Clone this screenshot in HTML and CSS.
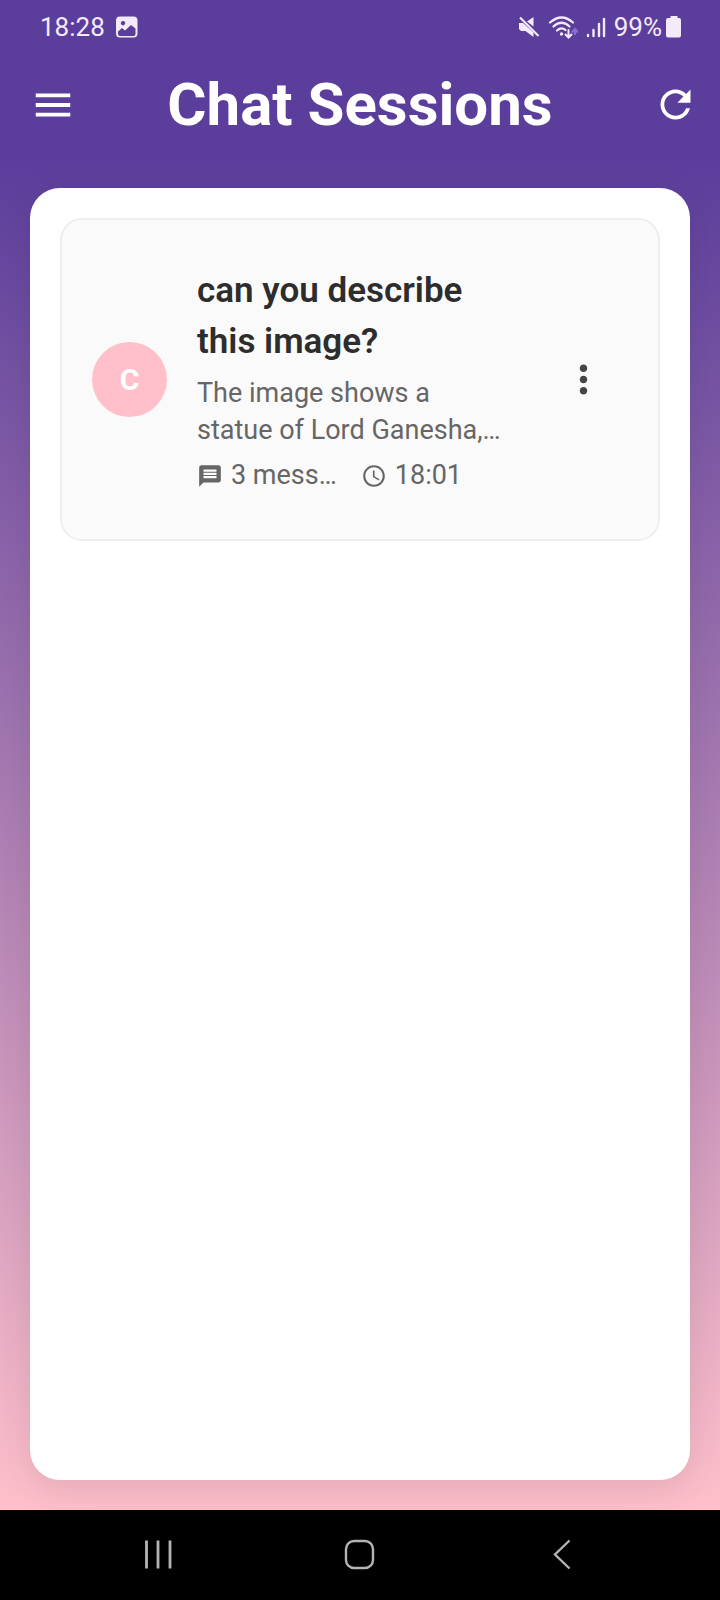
FILE: index.html
```html
<!DOCTYPE html>
<html lang="en">
<head>
<meta charset="utf-8">
<meta name="viewport" content="width=device-width, initial-scale=1">
<title>Chat Sessions</title>
<link rel="stylesheet" href="styles.css">
</head>
<body>
<div class="screen">
  <div class="status">
    <div class="status-group">
      <span>18:28</span>
      <svg width="22" height="22" viewBox="0 0 22 22" aria-hidden="true">
        <path fill="currentColor" fill-rule="evenodd" d="M4 .5h13.500a4 4 0 0 1 4 4v13a4 4 0 0 1-4 4H4a4 4 0 0 1-4-4v-13a4 4 0 0 1 4-4zM2 15.500v2.500a2 2 0 0 0 2 2h13.500a2 2 0 0 0 2-2v-5.500l-4.500-3.500-6 5.500-3-2.500zM7 5a2.200 2.200 0 1 0 .01 0z"/>
      </svg>
    </div>
    <div class="status-group status-right">
      <svg width="22" height="22" viewBox="0 0 22 22" aria-hidden="true">
        <path fill="currentColor" d="M15.500 1v9.500L9 5.500zM1 7h4l10.500 9.500V21L7.500 15H3L1 13z"/>
        <path stroke="currentColor" stroke-width="2.200" d="M2 1.500 20.500 20"/>
      </svg>
      <svg width="30" height="24" viewBox="0 0 30 24" aria-hidden="true">
        <g fill="none" stroke="currentColor" stroke-width="2.200" stroke-linecap="round">
          <path d="M2 7.500Q13.500-2.500 25 7.500M5.500 11.500Q13.500 4 21.500 11.500M9 15.500Q13.500 11.500 17.500 15"/>
          <path stroke-width="2" d="M20.500 15v7M17.500 19.500l3 3 3-3"/>
        </g>
        <circle cx="13.500" cy="19" r="1.700" fill="currentColor"/>
        <path fill="none" stroke="#8a6cd0" stroke-width="2.200" d="M27 20v-6M24 17.500l3-3.500 3 3.500"/>
      </svg>
      <svg width="20" height="22" viewBox="0 0 20 22" aria-hidden="true">
        <path fill="none" stroke="currentColor" stroke-width="2.400" stroke-linecap="round" d="M2 19v1M7.500 14v6M13 8v12M18 3v17"/>
      </svg>
      <span class="battery">99%
        <svg width="16" height="22" viewBox="0 0 16 22" aria-hidden="true">
          <path fill="currentColor" d="M4.500 0h7v2h1.500a2 2 0 0 1 2 2v15.500a2 2 0 0 1-2 2h-11a2 2 0 0 1-2-2V4a2 2 0 0 1 2-2h2.500z"/>
        </svg>
      </span>
    </div>
  </div>
  <header class="appbar">
    <button class="icon-button" type="button" aria-label="Open menu">
      <svg width="46" height="46" viewBox="0 0 24 24" aria-hidden="true"><path fill="currentColor" d="M3 18h18v-2H3v2zm0-5h18v-2H3v2zm0-7v2h18V6H3z"/></svg>
    </button>
    <h1 class="title">Chat Sessions</h1>
    <button class="icon-button" type="button" aria-label="Refresh">
      <svg width="45" height="45" viewBox="0 0 24 24" aria-hidden="true"><path fill="currentColor" d="M17.650 6.350C16.200 4.900 14.210 4 12 4c-4.420 0-7.990 3.580-7.990 8s3.570 8 7.990 8c3.730 0 6.840-2.550 7.730-6h-2.080c-.82 2.330-3.040 4-5.650 4-3.310 0-6-2.690-6-6s2.690-6 6-6c1.660 0 3.140.69 4.220 1.780L13 11h7V4l-2.350 2.350z"/></svg>
    </button>
  </header>
  <main class="body">
    <div class="panel">
      <article class="session">
        <div class="avatar">C</div>
        <div class="content">
          <h2 class="session-title">can you describe this image?</h2>
          <p class="preview">The image shows a<br>statue of Lord Ganesha,…</p>
          <div class="meta">
            <span class="meta-item">
              <svg width="26" height="26" viewBox="0 0 24 24" aria-hidden="true"><path fill="currentColor" d="M20 2H4c-1.100 0-1.990.9-1.990 2L2 22l4-4h14c1.100 0 2-.9 2-2V4c0-1.100-.9-2-2-2zm-2 12H6v-2h12v2zm0-3H6V9h12v2zm0-3H6V6h12v2z"/></svg>
              <span>3 mess…</span>
            </span>
            <span class="meta-item">
              <svg width="26" height="26" viewBox="0 0 24 24" aria-hidden="true"><path fill="currentColor" d="M11.990 2C6.470 2 2 6.480 2 12s4.470 10 9.990 10C17.520 22 22 17.520 22 12S17.520 2 11.990 2zM12 20c-4.420 0-8-3.580-8-8s3.580-8 8-8 8 3.580 8 8-3.580 8-8 8zm.5-13H11v6l5.250 3.150.75-1.230-4.500-2.670z"/></svg>
              <time>18:01</time>
            </span>
          </div>
        </div>
        <button class="more" type="button" aria-label="More options">
          <svg width="45" height="45" viewBox="0 0 24 24" aria-hidden="true"><path fill="currentColor" d="M12 8c1.100 0 2-.9 2-2s-.9-2-2-2-2 .9-2 2 .9 2 2 2zm0 2c-1.100 0-2 .9-2 2s.9 2 2 2 2-.9 2-2-.9-2-2-2zm0 6c-1.100 0-2 .9-2 2s.9 2 2 2 2-.9 2-2-.9-2-2-2z"/></svg>
        </button>
      </article>
    </div>
  </main>
  <nav class="navbar" aria-label="System navigation">
    <button class="nav-button" type="button" aria-label="Recent apps">
      <svg width="32" height="32" viewBox="0 0 32 32" aria-hidden="true"><path fill="none" stroke="currentColor" stroke-width="2.800" d="M4.500 1.500v28M16 1.500v28M28 1.500v28"/></svg>
    </button>
    <button class="nav-button" type="button" aria-label="Home">
      <svg width="32" height="32" viewBox="0 0 32 32" aria-hidden="true"><rect x="2" y="2" width="27" height="27" rx="8" fill="none" stroke="currentColor" stroke-width="2.400"/></svg>
    </button>
    <button class="nav-button" type="button" aria-label="Back">
      <svg width="32" height="32" viewBox="0 0 32 32" aria-hidden="true"><path fill="none" stroke="currentColor" stroke-width="2.400" d="M23.500 1.500 9 15.500 23.500 29.500"/></svg>
    </button>
  </nav>
</div>
</body>
</html>
```
FILE: styles.css
```css
* {
  box-sizing: border-box;
}

body {
  margin: 0;
  font-family: Roboto, "Liberation Sans", sans-serif;
}

h1,
h2,
p {
  margin: 0;
}

button {
  display: flex;
  align-items: center;
  justify-content: center;
  padding: 0;
  border: 0;
  background: none;
  color: inherit;
  font: inherit;
}

svg {
  display: block;
  flex: none;
}

.screen {
  display: flex;
  flex-direction: column;
  min-height: 100vh;
  background: #5b3e9c;
}

.status {
  display: flex;
  justify-content: space-between;
  align-items: center;
  height: 53px;
  padding: 0 38px 0 40px;
  color: #f4eafc;
  font-size: 26px;
}

.status-group {
  display: flex;
  align-items: center;
  gap: 11px;
}

.status-right {
  gap: 8px;
}

.battery {
  display: flex;
  align-items: center;
  gap: 4px;
}

.appbar {
  display: grid;
  grid-template-columns: 1fr auto 1fr;
  align-items: center;
  height: 105px;
  padding: 0 22px 2px 30px;
  color: #fff;
}

.icon-button:first-child {
  justify-self: start;
}

.icon-button:last-child {
  justify-self: end;
}

.title {
  padding-right: 8px;
  font-size: 60px;
  font-weight: 700;
  line-height: 70px;
}

.body {
  display: flex;
  flex: 1;
  padding: 30px;
  overflow: hidden;
  background: linear-gradient(#5b3e9c, #ffc0cb);
}

.panel {
  flex: 1;
  padding: 30px;
  border-radius: 30px;
  background: #fff;
  box-shadow: 0 10px 38px rgba(0, 0, 0, 0.1);
}

.session {
  display: flex;
  align-items: center;
  gap: 30px;
  padding: 45px 52px 45px 30px;
  border: 2px solid #eee;
  border-radius: 22px;
  background: #fafafa;
}

.avatar {
  display: flex;
  flex: none;
  align-items: center;
  justify-content: center;
  width: 75px;
  height: 75px;
  border-radius: 50%;
  background: #ffc0cb;
  color: #fff;
  font-size: 30px;
  font-weight: 700;
}

.content {
  flex: 1;
  min-width: 0;
}

.session-title {
  max-width: 320px;
  color: #2d2d2d;
  font-size: 35px;
  font-weight: 600;
  line-height: 51px;
}

.preview {
  margin-top: 8px;
  color: #666;
  font-size: 27px;
  line-height: 37px;
}

.meta {
  display: flex;
  gap: 24px;
  margin-top: 8px;
  color: #666;
  font-size: 27px;
  line-height: 37px;
}

.meta-item {
  display: flex;
  align-items: center;
  gap: 8px;
}

.more {
  color: #444;
}

.navbar {
  display: grid;
  grid-template-columns: repeat(3, 1fr);
  height: 90px;
  padding: 0 57px;
  background: #000;
  color: #b4b4b4;
}
```
